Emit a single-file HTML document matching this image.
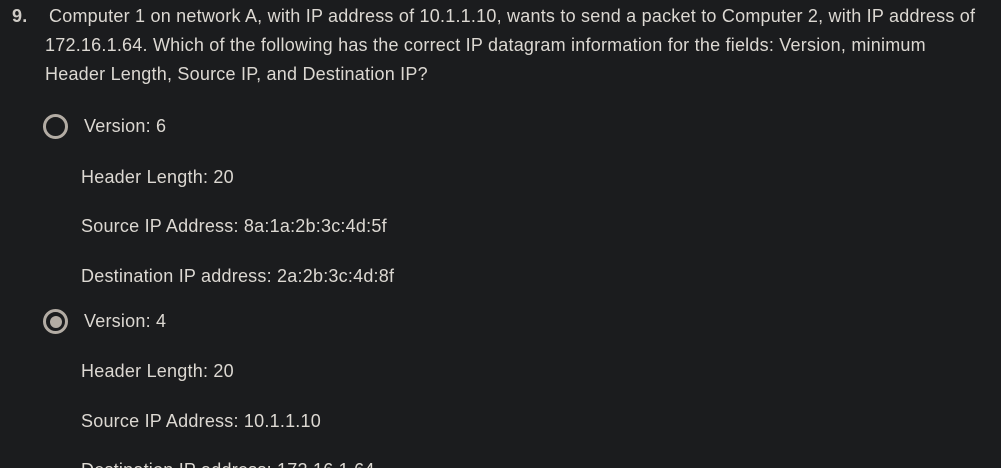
<!DOCTYPE html>
<html><head><style>
html,body{margin:0;background:#1b1c1e;width:1001px;height:468px;overflow:hidden;}
body{font-family:"Liberation Sans",sans-serif;color:#dcd8d2;font-size:18px;position:relative}
.t{position:absolute;white-space:nowrap;line-height:20px;letter-spacing:0.22px}
.r{position:absolute;width:25px;height:25px;border:3px solid #b3aca4;border-radius:50%;box-sizing:border-box}
.r.s::after{content:"";position:absolute;left:3.5px;top:3.5px;width:12px;height:12px;border-radius:50%;background:#b3aca4}
</style></head><body>
<div class="t" style="left:12px;top:6px;font-weight:bold;color:#cfcbc6">9.</div>
<div class="t" style="left:49px;top:6px;">Computer 1 on network A, with IP address of 10.1.1.10, wants to send a packet to Computer 2, with IP address of</div>
<div class="t" style="left:45px;top:35px;">172.16.1.64. Which of the following has the correct IP datagram information for the fields: Version, minimum</div>
<div class="t" style="left:45px;top:64px;">Header Length, Source IP, and Destination IP?</div>
<div class="r" style="left:43px;top:114px"></div>
<div class="t" style="left:84px;top:116px;">Version: 6</div>
<div class="t" style="left:81px;top:167px;">Header Length: 20</div>
<div class="t" style="left:81px;top:216px;">Source IP Address: 8a:1a:2b:3c:4d:5f</div>
<div class="t" style="left:81px;top:266px;">Destination IP address: 2a:2b:3c:4d:8f</div>
<div class="r s" style="left:43px;top:309px"></div>
<div class="t" style="left:84px;top:311px;">Version: 4</div>
<div class="t" style="left:81px;top:361px;">Header Length: 20</div>
<div class="t" style="left:81px;top:411px;">Source IP Address: 10.1.1.10</div>
<div class="t" style="left:81px;top:460px;">Destination IP address: 172.16.1.64</div>
</body></html>
